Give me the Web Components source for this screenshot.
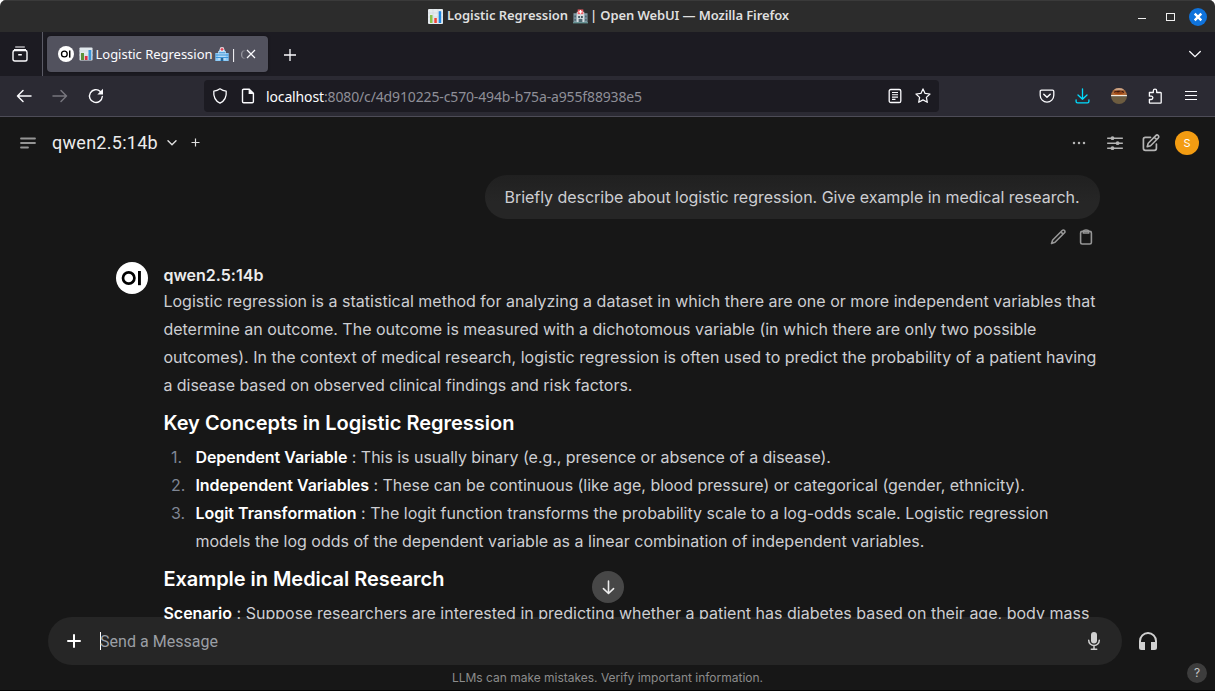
<!DOCTYPE html>
<html lang="en">
<head>
<meta charset="utf-8">
<title>Logistic Regression | Open WebUI</title>
<style>
html,body{margin:0;height:100%;background:#fff;overflow:hidden}
</style>
</head>
<body>
<browser-window></browser-window>
<script>
const define = (name, html) => customElements.define(name, class extends HTMLElement {
  connectedCallback() {
    if (this.shadowRoot) return;
    this.attachShadow({ mode: 'open' }).innerHTML = '<style>*{box-sizing:border-box}</style>' + html;
  }
});

const ICONS = {
  recent: ['0 0 16 16', '<path d="M3.2 1h9.6M2 3.6h12" stroke-width="1.1"/><path d="M1 6.2q0-1.7 1.7-1.7h10.6q1.7 0 1.7 1.7v7q0 1.8-1.8 1.8H2.8Q1 15 1 13.200z" stroke-width="1.400"/><path d="M6.200 8.700h3.600" stroke-width="1.500"/>'],
  x: ['0 0 10 10', '<path d="M1 1l8 8M9 1l-8 8" stroke-width="1.200"/>'],
  plus: ['0 0 12 12', '<path d="M6 0v12M0 6h12" stroke-width="1.300"/>'],
  plusmini: ['0 0 9 9', '<path d="M4.500 .5v8M.5 4.500h8" stroke-width="1.200"/>'],
  plusbold: ['0 0 14 14', '<path d="M7 1v12M1 7h12" stroke-width="2" stroke-linecap="round"/>'],
  chevron: ['0 0 12 8', '<path d="M.7 1.500L6 6.700l5.300-5.200" stroke-width="1.300" stroke-linecap="round"/>'],
  chevmini: ['0 0 10 6', '<path d="M1 .8L5 4.800 9 .8" stroke-width="1.400" stroke-linecap="round" stroke-linejoin="round"/>'],
  back: ['0 0 16 16', '<path d="M15 8H1.500M7 2.500L1.500 8 7 13.500" stroke-width="1.500" stroke-linecap="round" stroke-linejoin="round"/>'],
  fwd: ['0 0 16 16', '<path d="M1 8h13.500M9 2.500L14.500 8 9 13.500" stroke-width="1.500" stroke-linecap="round" stroke-linejoin="round"/>'],
  reload: ['0 0 16 16', '<path d="M14.300 8.500A6.400 6.400 0 1 1 12.300 3.400" stroke-width="1.400" stroke-linecap="round"/><path d="M15 .8v5.700H9.300z" fill="currentColor" stroke="none"/>'],
  shield: ['0 0 16 16', '<path d="M8 .8Q10.800 2.800 14.200 3.200 15 11.600 8 15.200 1 11.600 1.800 3.200 5.200 2.800 8 .8z" stroke-width="1.300" stroke-linejoin="round"/>'],
  file: ['0 0 16 16', '<path d="M3.700 1.200h5.500l4.200 4.200v8.200q0 1.200-1.200 1.200H3.700q-1.200 0-1.200-1.200V2.400q0-1.200 1.200-1.200z" stroke-width="1.400"/><path d="M8.600 1v5h5z" fill="currentColor" stroke="none"/>'],
  reader: ['0 0 16 16', '<rect x="2.200" y="1.500" width="11.600" height="13" rx="1.600" stroke-width="1.300"/><path d="M5 4.500h6M5 6.800h6M5 9.100h6M5 11.400h3.500" stroke-width="1.100"/>'],
  star: ['0 0 16 16', '<path d="M8 .9l2.100 4.500 4.900.6-3.600 3.400.9 4.900L8 11.900l-4.300 2.400.9-4.900L1 6l4.900-.6z" stroke-width="1.250" stroke-linejoin="round"/>'],
  pocket: ['0 0 16 16', '<path d="M2.500 2.200h11q1.300 0 1.300 1.300v3.800a6.800 6.800 0 0 1-13.600 0V3.500q0-1.300 1.300-1.300z" stroke-width="1.300"/><path d="M4.800 6.300L8 9.300l3.200-3" stroke-width="1.500" stroke-linecap="round" stroke-linejoin="round"/>'],
  download: ['0 0 16 16', '<path d="M7.500 .8v10.500M3 7l4.500 4.300L12 7M1.100 11.800v1.700q0 1.400 1.400 1.400h10q1.400 0 1.400-1.400v-1.700" stroke-width="1.300" stroke-linecap="round" stroke-linejoin="round"/>'],
  puzzle: ['0 0 16 16', '<path d="M2.400 4.500h3.900V2.900a1.700 1.700 0 0 1 3.400 0v1.600h3.700q.8 0 .8.800v9.100q0 .8-.8.800H3.200q-.8 0-.8-.8v-2.900h1.800a1.650 1.650 0 0 0 0-3.300H2.400z" stroke-width="1.300" stroke-linejoin="round"/>'],
  menu: ['0 0 12 12', '<path d="M0 1.500h12M0 5.500h12M0 9.500h12" stroke-width="1.200"/>'],
  side: ['0 0 16 12', '<path d="M1 1.500h14M1 6h14M1 10.500h7" stroke-width="1.800" stroke-linecap="round"/>'],
  dots: ['0 0 14 4', '<g fill="currentColor" stroke="none"><circle cx="2" cy="2" r="1.250"/><circle cx="7" cy="2" r="1.250"/><circle cx="12" cy="2" r="1.250"/></g>'],
  sliders: ['0 0 16 16', '<path d="M.7 3.200h14.600M.7 8.200h14.600M.7 13.200h14.600" stroke-width="1.500" stroke-linecap="round"/><g fill="currentColor" stroke="none"><circle cx="5.500" cy="3.200" r="1.900"/><circle cx="10.600" cy="8.200" r="1.900"/><circle cx="5.500" cy="13.200" r="1.900"/></g>'],
  edit: ['0 0 18 18', '<path d="M8.500 3.300H3.400q-2 0-2 2v9q0 2 2 2h9q2 0 2-2V10" stroke-width="1.700" stroke-linecap="round"/><path d="M13.800 1.600a1.650 1.650 0 0 1 2.500 2.400L8.600 11.700l-3.400 1.100 1-3.500zM12.300 3.300l2.400 2.400" stroke-width="1.600" stroke-linejoin="round"/>'],
  pencil: ['0 0 16 16', '<path d="M12.200 1.500a1.550 1.550 0 0 1 2.300 2.300L5 13.300l-3.500 1.200 1.200-3.500zM10.900 2.900l2.200 2.200" stroke-width="1.600" stroke-linejoin="round"/>'],
  clip: ['0 0 14 16', '<rect x="1.600" y="2.400" width="10.800" height="12.600" rx="1.600" stroke-width="1.600"/><path d="M4.300 4V2.600Q4.300 1 7 1t2.700 1.600V4z" stroke-width="1.300"/>'],
  down: ['0 0 16 16', '<path d="M8 1.200v13M2.600 9.200L8 14.400l5.400-5.200" stroke-width="1.700" stroke-linecap="round" stroke-linejoin="round"/>'],
  mic: ['0 0 14 20', '<rect x="4" y="1" width="6" height="11.500" rx="3" fill="currentColor" stroke="none"/><path d="M1.700 9.300a5.300 5.300 0 0 0 10.600 0M7 14.500V18M4.300 18.300h5.400" stroke-width="1.500" stroke-linecap="round"/>'],
  head: ['0 0 20 20', '<path d="M2 13V10a8 8 0 0 1 16 0v3" stroke-width="2"/><path d="M1 11h6v8H3.500Q1 19 1 16.500zM19 11h-6v8h3.500q2.500 0 2.500-2.500z" fill="currentColor" stroke="none"/>'],
  oi: ['0 0 32 32', '<circle cx="16" cy="16" r="16" fill="#fff" stroke="none"/><circle cx="12.700" cy="16" r="5.700" stroke="#000" stroke-width="2.700"/><rect x="22" y="9" width="2.900" height="14.200" fill="#000" stroke="none"/>'],
  close: ['0 0 18 18', '<circle cx="9" cy="9" r="9" fill="#0f73dc" stroke="none"/><path d="M5.700 5.700l6.600 6.600M12.300 5.700l-6.600 6.600" stroke="#fff" stroke-width="2.400"/>'],
  chart: ['0 0 15 15', '<rect width="15" height="15" rx="1" fill="#e6ecef" stroke="none"/><path d="M0 4h15M0 8h15M0 12h15M5 0v15M10 0v15" stroke="#c9d3d9" stroke-width=".5"/><path d="M2 6h2.500v8H2z" fill="#8bc34a" stroke="none"/><path d="M6.300 9h2.500v5H6.300z" fill="#f44336" stroke="none"/><path d="M10.700 2.200h2.500V14h-2.500z" fill="#1e88e5" stroke="none"/>'],
  charttab: ['0 0 14 14', '<rect x=".5" y=".5" width="13" height="13" rx=".8" fill="#e1e8ed" stroke="none"/><path d="M0 4h14M0 8h14" stroke="#ccd6dd" stroke-width=".7"/><path d="M2 6h3v7H2z" fill="#5c913b" stroke="none"/><path d="M5.800 9h2.800v4H5.800z" fill="#dd2e44" stroke="none"/><path d="M9.500 3h2.800v10H9.500z" fill="#3b94d9" stroke="none"/>'],
  hospital: ['0 0 16 16', '<path d="M.5 4.500h15V14H.5z" fill="#819ba6" stroke="none"/><path d="M4 3h8v11H4z" fill="#d5dde0" stroke="none"/><path d="M5 .5h6v5H5z" fill="#f05b62" stroke="none"/><path d="M8 1v4M6 3h4" stroke="#fff" stroke-width="1.200"/><path d="M1.500 7h1.500v2H1.500zM1.500 10.500h1.500v2H1.500zM13 7h1.500v2H13zM13 10.500h1.500v2H13zM5.500 7.500h2v2h-2zM8.500 7.500h2v2h-2z" fill="#455a64" stroke="none"/><path d="M6 10.500h4V14H6z" fill="#4f6872" stroke="none"/><path d="M0 14h16v1.300H0z" fill="#6ea0a0" stroke="none"/>'],
  hospitaltab: ['0 0 14 14', '<path d="M4 3h6v10H4zM.3 6h13.400v8H.3z" fill="#8ccaf7" stroke="none"/><path d="M3.200 4h7.600v9H3.200z" fill="#b8dcf5" stroke="none"/><path d="M.6 8h12.800M.6 10.500h12.800M4 5.700h6" stroke="#3b94d9" stroke-width="1.100"/><circle cx="7" cy="2.300" r="2.300" fill="#eef1f4" stroke="none"/><path d="M7 .7v3.200M5.400 2.300h3.200" stroke="#dd2e44" stroke-width="1.100"/><path d="M5.700 11h2.600v3H5.700z" fill="#226699" stroke="none"/>'],
  ext: ['0 0 16 16', '<clipPath id="c"><circle cx="8" cy="8" r="8"/></clipPath><g clip-path="url(#c)" stroke="none"><path d="M0 0h16v8H0z" fill="#a86a3c"/><ellipse cx="8" cy="1" rx="6" ry="1.500" fill="#c9a184"/><ellipse cx="8" cy="4.300" rx="5" ry="1.900" fill="#3c1910"/><path d="M2 5.500l3-2 2 1 3-1.500 4 3-3 1H4z" fill="#d0641e" opacity=".6"/><path d="M0 7h16v1.500H0z" fill="#f2e9dc"/><path d="M0 8.400h16V16H0z" fill="#6d5c40"/></g>']
};

customElements.define('ui-icon', class extends HTMLElement {
  connectedCallback() {
    if (this.shadowRoot) return;
    const [box, body] = ICONS[this.getAttribute('name')];
    const [, , bw, bh] = box.split(' ').map(Number);
    const w = +(this.getAttribute('w') || bw), h = w * bh / bw;
    this.attachShadow({ mode: 'open' }).innerHTML =
      `<style>:host{display:block;flex:none;width:${w}px;height:${h}px}svg{display:block}</style>
       <svg width="${w}" height="${h}" viewBox="${box}" fill="none" stroke="currentColor">${body}</svg>`;
  }
});

/* A square cell that centres its icon. */
define('icon-cell', `<style>:host{display:flex;flex:none;width:36px;align-items:center;justify-content:center;align-self:stretch}</style><slot></slot>`);

define('title-bar', `<style>
:host{display:grid;grid-template-columns:428px 1fr auto;align-items:center;height:32px;background:#2c2c2c;border-top:1px solid #3a3a3a;color:#dfdfdf;font:600 13px/18px "Noto Sans","Open Sans",sans-serif}
.t{grid-column:2;display:flex;align-items:center;height:18px}
.t fit-text{margin-bottom:3px}
.c{display:flex;align-items:center;padding-right:8px}
.min{width:8px;height:1.500px;background:#eee;margin:4px 20px 0 0}
.max{width:9px;height:8px;border:1px solid #eee;margin-right:14px}
</style>
<div class="t"><ui-icon name="chart" w="15"></ui-icon><fit-text w="121" style="margin-left:4px">Logistic Regression</fit-text><ui-icon name="hospital" w="15" style="margin-left:5px;margin-right:2px"></ui-icon><fit-text w="199">| Open WebUI — Mozilla Firefox</fit-text></div>
<div class="c"><div class="min"></div><div class="max"></div><ui-icon name="close" w="18"></ui-icon></div>`);

define('tab-strip', `<style>
:host{display:flex;height:44px;background:#1c1b22;color:#fbfbfe;font:400 13px "Noto Sans","Open Sans",sans-serif}
.r{width:43px;border-right:1px solid #5b5b66;display:flex;align-items:center;padding-left:12px}
.tab{margin:4px 0 4px 4px;width:221px;border-radius:4px;background:#52525e;display:flex;align-items:center;padding-left:11px;box-shadow:0 0 3px #0006}
.f{width:16px;overflow:hidden;white-space:nowrap;margin-left:1px;letter-spacing:-.2px;-webkit-mask:linear-gradient(90deg,#000 35%,#0000 100%)}
.sp{flex:1}
</style>
<div class="r"><ui-icon name="recent" w="16"></ui-icon></div>
<div class="tab"><ui-icon name="oi" w="16"></ui-icon><ui-icon name="charttab" w="14" style="margin-left:4.500px"></ui-icon><fit-text w="117" style="margin-left:3px">Logistic Regression</fit-text><ui-icon name="hospitaltab" w="14" style="margin-left:2.500px"></ui-icon><div class="f">| Open WebUI</div><ui-icon name="x" w="10"></ui-icon></div>
<ui-icon name="plus" w="12" style="margin:16.500px 0 0 15.500px"></ui-icon>
<div class="sp"></div><ui-icon name="chevron" w="12" style="margin:18px 14px 0 0"></ui-icon>`);

define('nav-bar', `<style>
:host{display:flex;height:41px;background:#2b2a33;border-bottom:1px solid #4d4c57;color:#fbfbfe;padding-left:6px;padding-right:6px;font:400 14px "Noto Sans","Open Sans",sans-serif}
.url{width:735px;margin:4px 0 4px 90px;border-radius:4px;background:#1c1b22;display:flex;align-items:center}
.url icon-cell{width:28px}
.sp{flex:1}b{font-weight:400;color:#fbfbfe}
fit-text{color:#8f8f98}
</style>
<icon-cell><ui-icon name="back" w="16"></ui-icon></icon-cell><icon-cell style="color:#77767e"><ui-icon name="fwd" w="16"></ui-icon></icon-cell><icon-cell><ui-icon name="reload" w="16"></ui-icon></icon-cell>
<div class="url"><icon-cell style="margin-left:2px"><ui-icon name="shield" w="16"></ui-icon></icon-cell><icon-cell><ui-icon name="file" w="16"></ui-icon></icon-cell><fit-text w="376" style="margin-left:4px"><b>localhost</b>:8080/c/4d910225-c570-494b-b75a-a955f88938e5</fit-text><div class="sp"></div><icon-cell><ui-icon name="reader" w="16"></ui-icon></icon-cell><icon-cell style="margin-right:2px"><ui-icon name="star" w="16"></ui-icon></icon-cell></div>
<div class="sp"></div>
<icon-cell><ui-icon name="pocket" w="16"></ui-icon></icon-cell><icon-cell style="color:#00ddff"><ui-icon name="download" w="16"></ui-icon></icon-cell><icon-cell><ui-icon name="ext" w="16"></ui-icon></icon-cell><icon-cell><ui-icon name="puzzle" w="16"></ui-icon></icon-cell><icon-cell><ui-icon name="menu" w="12"></ui-icon></icon-cell>`);

define('chat-header', `<style>
:host{display:flex;align-items:center;height:52px;padding:0 10px 0 20px;color:#b4b4b4}
.m{font:400 18px Roboto,"Liberation Sans",sans-serif;color:#ececec;margin:0 0 2px 16px}
.sp{flex:1}
.a{width:24px;height:24px;border-radius:50%;background:#f39c12;color:#fff;font:400 11px/24px Inter,sans-serif;text-align:center}
</style>
<ui-icon name="side" w="16" style="color:#959595"></ui-icon><fit-text class="m" w="106">qwen2.5:14b</fit-text>
<ui-icon name="chevmini" w="10" style="margin-left:9px;color:#e0e0e0"></ui-icon><ui-icon name="plusmini" w="9" style="margin-left:13.500px;margin-bottom:1px;color:#e0e0e0"></ui-icon>
<div class="sp"></div>
<icon-cell><ui-icon name="dots" w="14"></ui-icon></icon-cell><icon-cell><ui-icon name="sliders" w="16"></ui-icon></icon-cell><icon-cell><ui-icon name="edit" w="18"></ui-icon></icon-cell><icon-cell><div class="a">S</div></icon-cell>`);

define('user-message', `<style>
:host{display:flex;flex-direction:column;align-items:flex-end}
.b{width:615px;height:44px;padding:0 20px 0 19.500px;border-radius:24px;background:linear-gradient(#202020,#262626 60%);display:flex;align-items:center}
.i{display:flex;gap:13px;padding:10px 7px 0 0;color:#969696;height:27px}
</style><div class="b"><slot></slot></div><div class="i"><ui-icon name="pencil" w="16"></ui-icon><ui-icon name="clip" w="14"></ui-icon></div>`);

define('assistant-message', `<style>
:host{display:flex;margin-top:16px}
.body{margin-left:15.400px;flex:1;white-space:nowrap}
.n{font-weight:600;line-height:24px;height:25px;padding-top:1px;color:#ececec}
</style><ui-icon name="oi" w="32"></ui-icon><div class="body"><div class="n"><fit-text w="100">qwen2.5:14b</fit-text></div><slot></slot></div>`);

define('list-row', `<style>:host{display:grid;grid-template-columns:32px 1fr}.n{color:#7f8694;padding-left:7.500px}</style><div class="n"><slot name="n"></slot></div><div><slot></slot></div>`);

define('chat-log', `<style>
:host{display:block;height:450px;overflow:hidden;padding:6px 115px 0 116px;font:400 16px/28px Inter,sans-serif;color:#cdced2;position:relative;z-index:1}
fit-text{display:block}
h3{margin:8px 0 4px;font:600 20px/32px Inter,sans-serif;color:#fff}
strong{font-weight:600;color:#fff}
</style>
<user-message><fit-text w="575">Briefly describe about logistic regression. Give example in medical research.</fit-text></user-message>
<assistant-message>
<fit-text w="932">Logistic regression is a statistical method for analyzing a dataset in which there are one or more independent variables that</fit-text>
<fit-text w="873">determine an outcome. The outcome is measured with a dichotomous variable (in which there are only two possible</fit-text>
<fit-text w="933">outcomes). In the context of medical research, logistic regression is often used to predict the probability of a patient having</fit-text>
<fit-text w="469">a disease based on observed clinical findings and risk factors.</fit-text>
<h3><fit-text w="351">Key Concepts in Logistic Regression</fit-text></h3>
<list-row><span slot="n">1.</span><fit-text w="635.500"><strong>Dependent Variable</strong> : This is usually binary (e.g., presence or absence of a disease).</fit-text></list-row>
<list-row><span slot="n">2.</span><fit-text w="829.500"><strong>Independent Variables</strong> : These can be continuous (like age, blood pressure) or categorical (gender, ethnicity).</fit-text></list-row>
<list-row><span slot="n">3.</span><fit-text w="853"><strong>Logit Transformation</strong> : The logit function transforms the probability scale to a log-odds scale. Logistic regression</fit-text><fit-text w="729">models the log odds of the dependent variable as a linear combination of independent variables.</fit-text></list-row>
<h3><fit-text w="281">Example in Medical Research</fit-text></h3>
<fit-text w="926"><strong>Scenario</strong> : Suppose researchers are interested in predicting whether a patient has diabetes based on their age, body mass</fit-text>
</assistant-message>`);

define('message-input', `<style>
:host{display:flex;align-items:center;margin-top:-2px;padding-left:48px;color:#d0d0d0}
.box{display:flex;align-items:center;width:1074px;height:48px;border-radius:24px;background:#262626;padding:0 21px 0 19px}
.p{display:flex;border-left:1px solid #fff;height:18px;margin-left:19px;font:400 16px/20px Roboto,"Liberation Sans",sans-serif;color:#9b9fa5}
.sp{flex:1}
</style><div class="box"><ui-icon name="plusbold" w="14" style="color:#fff"></ui-icon><div class="p"><fit-text w="118" style="margin-left:-1px">Send a Message</fit-text></div><div class="sp"></div><ui-icon name="mic" w="14"></ui-icon></div><ui-icon name="head" w="20" style="margin-left:16px"></ui-icon>`);

define('scroll-button', `<style>:host{position:absolute;left:592px;top:454px;z-index:2;width:32px;height:32px;border-radius:50%;background:#474747;color:#eee;display:flex;align-items:center;justify-content:center}</style><ui-icon name="down" w="15"></ui-icon>`);
define('help-button', `<style>:host{position:absolute;right:8px;bottom:7px;width:20px;height:20px;border-radius:50%;background:#3d3d3d;color:#c4c4c4;font:400 12px/20px Inter,sans-serif;text-align:center}</style>?`);

define('chat-page', `<style>
:host{display:block;position:relative;flex:1;background:#171717;border-bottom:1px solid #050505}
.foot{text-align:center;font:400 12px/16px Inter,sans-serif;color:#8c8c8c;padding-top:5px}
</style><chat-header></chat-header><chat-log></chat-log><message-input></message-input><div class="foot"><fit-text w="311">LLMs can make mistakes. Verify important information.</fit-text></div><scroll-button></scroll-button><help-button></help-button>`);

define('browser-window', `<style>:host{display:flex;flex-direction:column;width:1215px;height:691px;overflow:hidden;border-radius:6px 6px 0 0}</style><title-bar></title-bar><tab-strip></tab-strip><nav-bar></nav-bar><chat-page></chat-page>`);

/* Tracks a line of text out to the width given in its w attribute. */
customElements.define('fit-text', class extends HTMLElement {
  connectedCallback() {
    if (this.shadowRoot) return;
    this.attachShadow({ mode: 'open' }).innerHTML = '<style>:host{display:inline-block;white-space:nowrap}span{display:inline-block}</style><span><slot></slot></span>';
    const width = this.shadowRoot.querySelector('span').getBoundingClientRect().width;
    this.style.letterSpacing = (this.getAttribute('w') - width) / this.textContent.length + 'px';
  }
});
</script>
</body>
</html>
